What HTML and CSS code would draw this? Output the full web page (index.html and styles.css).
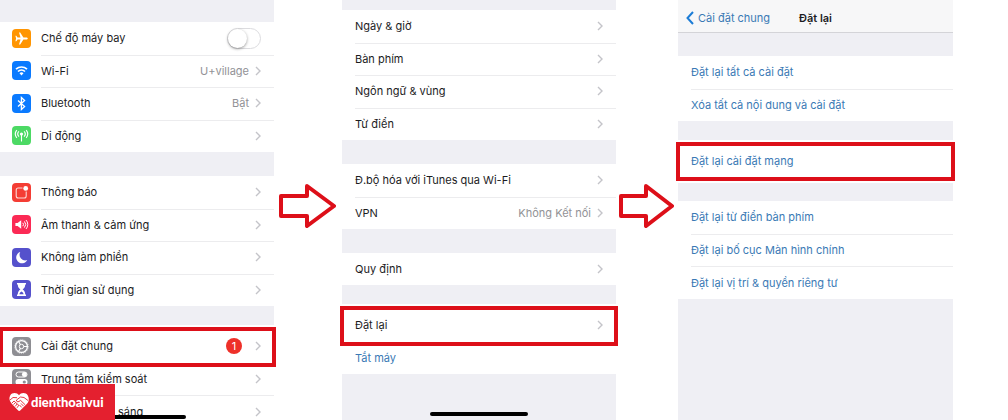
FILE: index.html
```html
<!DOCTYPE html>
<html lang="vi">
<head>
    <meta charset="UTF-8">
    <meta name="viewport" content="width=device-width, initial-scale=1.0">
    <title>Đặt lại cài đặt mạng</title>
    <link rel="stylesheet" href="styles.css">
</head>
<body>
    <svg class="defs" aria-hidden="true">
        <symbol id="chevron" viewBox="0 0 6 10"><path d="M1 1l4 4-4 4" fill="none" stroke="#c4c4c9" stroke-width="1.4"/></symbol>
    </svg>

    <main class="steps">
        <!-- Step 1: Settings -->
        <section class="phone phone-settings">
            <div class="group rows-4">
                <div class="row">
                    <svg class="icon orange" viewBox="0 0 19 19"><path d="M15.8 9.5c0-.7-.8-1.1-1.6-1.1h-2.8L8.2 3.6H7l1.5 4.800H5.600L4.300 6.800h-.9l.7 2.700-.7 2.700h.9l1.300-1.600h2.900L7 15.400h1.200l3.200-4.800h2.800c.8 0 1.600-.4 1.600-1.100z" fill="#fff"/></svg>
                    <label class="title" for="airplane">Chế độ máy bay</label>
                    <input class="toggle" type="checkbox" id="airplane">
                </div>
                <a class="row" href="#">
                    <svg class="icon blue" viewBox="0 0 19 19"><path d="M4 8.2a8 8 0 0 1 11 0M6 10.5a5 5 0 0 1 7 0" fill="none" stroke="#fff" stroke-width="1.7"/><path d="M7.5 12.2a3 3 0 0 1 4 0l-2 2.2z" fill="#fff"/></svg>
                    <span class="title">Wi-Fi</span>
                    <span class="value">U+village</span>
                    <svg class="chevron"><use href="#chevron"/></svg>
                </a>
                <a class="row" href="#">
                    <svg class="icon blue" viewBox="0 0 19 19"><path d="M6 6.4l6.6 6L9.4 15.4V3.6l3.2 3L6 12.6" fill="none" stroke="#fff" stroke-width="1.3"/></svg>
                    <span class="title">Bluetooth</span>
                    <span class="value">Bật</span>
                    <svg class="chevron"><use href="#chevron"/></svg>
                </a>
                <a class="row" href="#">
                    <svg class="icon green" viewBox="0 0 19 19"><circle cx="9.5" cy="8" r="1.6" fill="#fff"/><path d="M9.5 8v7.5M6.9 5.4a3.8 3.8 0 0 0 0 5.2M12.1 5.4a3.8 3.8 0 0 1 0 5.2M4.8 4.2a6 6 0 0 0 0 7.6M14.2 4.2a6 6 0 0 1 0 7.6" fill="none" stroke="#fff" stroke-width="1.1"/></svg>
                    <span class="title">Di động</span>
                    <svg class="chevron"><use href="#chevron"/></svg>
                </a>
            </div>
            <div class="group rows-4">
                <a class="row" href="#">
                    <svg class="icon red" viewBox="0 0 19 19"><path d="M10.5 5H6.2a2 2 0 0 0-2 2v6a2 2 0 0 0 2 2h6a2 2 0 0 0 2-2V8.5" fill="none" stroke="#fff" stroke-opacity=".8" stroke-width="1.1"/><circle cx="13.7" cy="5.4" r="2.4" fill="#fff"/></svg>
                    <span class="title">Thông báo</span>
                    <svg class="chevron"><use href="#chevron"/></svg>
                </a>
                <a class="row" href="#">
                    <svg class="icon pink" viewBox="0 0 19 19"><path d="M3.4 8h2.2l3.6-2.8v8.6L5.6 11H3.4z" fill="#fff"/><path d="M10.8 7.8a2.6 2.6 0 0 1 0 3.4M12.4 6.4a4.6 4.6 0 0 1 0 6.2M14 5a6.6 6.6 0 0 1 0 9" fill="none" stroke="#fff" stroke-width="1"/></svg>
                    <span class="title">Âm thanh &amp; cảm ứng</span>
                    <svg class="chevron"><use href="#chevron"/></svg>
                </a>
                <a class="row" href="#">
                    <svg class="icon purple" viewBox="0 0 19 19"><path d="M8.2 4a5.8 5.8 0 1 0 7 8.1A5.8 5.8 0 0 1 8.2 4z" fill="#fff"/></svg>
                    <span class="title">Không làm phiền</span>
                    <svg class="chevron"><use href="#chevron"/></svg>
                </a>
                <a class="row" href="#">
                    <svg class="icon purple" viewBox="0 0 19 19"><path d="M5 3h9v1.6h-.8c0 2.6-1 3.8-2.6 4.9 1.6 1.1 2.6 2.3 2.6 4.9h.8V16H5v-1.6h.8c0-2.6 1-3.8 2.6-4.9C6.8 8.4 5.8 7.2 5.8 4.6H5z" fill="#fff"/><path d="M7.4 14.2c.3-1.5 1.1-2 2.1-2.7 1 .7 1.8 1.2 2.1 2.7z" fill="#5551cc"/></svg>
                    <span class="title">Thời gian sử dụng</span>
                    <svg class="chevron"><use href="#chevron"/></svg>
                </a>
            </div>
            <div class="group rows-3">
                <a class="row marked marked-edge" href="#">
                    <svg class="icon gray" viewBox="0 0 19 19"><circle cx="9.5" cy="9.5" r="5.9" fill="none" stroke="#fff" stroke-width="1.3"/><circle cx="9.5" cy="9.5" r="6.8" fill="none" stroke="#fff" stroke-width=".8" stroke-dasharray="1 1"/><circle cx="9.5" cy="9.5" r="2.2" fill="none" stroke="#fff"/><path d="M11.7 9.5h3.5M8.4 7.6L6.6 4.5M8.4 11.4l-1.8 3.1" stroke="#fff" stroke-width="1.1"/></svg>
                    <span class="title">Cài đặt chung</span>
                    <span class="badge">1</span>
                    <svg class="chevron"><use href="#chevron"/></svg>
                </a>
                <a class="row" href="#">
                    <svg class="icon gray" viewBox="0 0 19 19"><rect x="4" y="3" width="11" height="5" rx="2.5" fill="none" stroke="#fff"/><circle cx="12.3" cy="5.5" r="2.4" fill="#fff"/><rect x="3.5" y="10" width="12" height="6" rx="3" fill="#fff"/><circle cx="12.3" cy="13" r="1.6" fill="#8e8e93"/></svg>
                    <span class="title">Trung tâm kiểm soát</span>
                    <svg class="chevron"><use href="#chevron"/></svg>
                </a>
                <a class="row behind-brand" href="#">
                    <span class="title">sáng</span>
                    <svg class="chevron"><use href="#chevron"/></svg>
                </a>
            </div>
            <div class="home-bar"></div>
        </section>

        <svg class="arrow" viewBox="0 0 57 46" width="57" height="46"><path d="M2 13h26V3l27 20-27 20V33H2z"/></svg>

        <!-- Step 2: General -->
        <section class="phone phone-general">
            <div class="group rows-4">
                <a class="row" href="#"><span class="title">Ngày &amp; giờ</span><svg class="chevron"><use href="#chevron"/></svg></a>
                <a class="row" href="#"><span class="title">Bàn phím</span><svg class="chevron"><use href="#chevron"/></svg></a>
                <a class="row" href="#"><span class="title">Ngôn ngữ &amp; vùng</span><svg class="chevron"><use href="#chevron"/></svg></a>
                <a class="row" href="#"><span class="title">Từ điển</span><svg class="chevron"><use href="#chevron"/></svg></a>
            </div>
            <div class="group rows-2">
                <a class="row" href="#"><span class="title">Đ.bộ hóa với iTunes qua Wi-Fi</span><svg class="chevron"><use href="#chevron"/></svg></a>
                <a class="row" href="#"><span class="title">VPN</span><span class="value">Không Kết nối</span><svg class="chevron"><use href="#chevron"/></svg></a>
            </div>
            <div class="group rows-1">
                <a class="row" href="#"><span class="title">Quy định</span><svg class="chevron"><use href="#chevron"/></svg></a>
            </div>
            <div class="group rows-2">
                <a class="row marked" href="#"><span class="title">Đặt lại</span><svg class="chevron"><use href="#chevron"/></svg></a>
                <button class="row action" type="button">Tắt máy</button>
            </div>
            <div class="home-bar"></div>
        </section>

        <svg class="arrow" viewBox="0 0 55 46" width="55" height="46"><path d="M2 13h25V3l26 20-26 20V33H2z"/></svg>

        <!-- Step 3: Reset -->
        <section class="phone phone-reset">
            <header class="nav">
                <a class="back" href="#"><svg width="8" height="14" viewBox="0 0 8 14"><path d="M7 1L1.5 7 7 13" fill="none" stroke="#1c7cd6" stroke-width="2"/></svg>Cài đặt chung</a>
                <h1>Đặt lại</h1>
            </header>
            <div class="group rows-2">
                <button class="row action" type="button">Đặt lại tất cả cài đặt</button>
                <button class="row action" type="button">Xóa tất cả nội dung và cài đặt</button>
            </div>
            <div class="group rows-1">
                <button class="row action marked" type="button">Đặt lại cài đặt mạng</button>
            </div>
            <div class="group rows-3">
                <button class="row action" type="button">Đặt lại từ điển bàn phím</button>
                <button class="row action" type="button">Đặt lại bố cục Màn hình chính</button>
                <button class="row action" type="button">Đặt lại vị trí &amp; quyền riêng tư</button>
            </div>
        </section>
    </main>

    <div class="brand">
        <svg width="20" height="20" viewBox="0 0 20 20"><path d="M10 3.2C7.8.2 3 .4 1.2 3.4-.4 6.2.6 9.4 3 12l6.2 6.6c.6.6 1.5.5 2 0L17.8 12c2.2-2.6 2.6-6 1-8.6C17 .4 12.2.2 10 3.2z" fill="#fff"/><path d="M1 8l3-2.5 4 .2M19 8.5l-4-3-3.5-.5L7.5 8c-.4 1.6 1.3 2.2 2.5 1.4l1.6-1 4.6 4.4M3 11l2-2 1.6 1.4-2 2.2M6.6 10.6l1.600 1.200-2 2.600M8.300 12.200l1.500 1-1.800 2.600M12 11.500l2.600 2.700M10.500 13l2.200 2.400" fill="none" stroke="#e4202f" stroke-width=".9"/></svg>
        <span>dienthoaivui</span>
    </div>
</body>
</html>
```
FILE: styles.css
```css
* { box-sizing: border-box; }
body { margin: 0; background: #fff; color: #1c1c1e; font-family: Inter, "Liberation Sans", sans-serif; font-size: 11px; line-height: 16px; overflow: hidden; }
a { color: inherit; text-decoration: none; }
.defs { position: absolute; width: 0; height: 0; }

.steps { display: grid; grid-template-columns: 274fr 68px 274fr 62px 275fr 55px; height: 100vh; }
.arrow { align-self: center; justify-self: center; margin-bottom: 9px; margin-right: 2px; fill: #fff; stroke: #dd0f19; stroke-width: 4px; stroke-linejoin: round; }

/* Phone screens */
.phone { position: relative; display: flex; flex-direction: column; gap: 24px; height: 100vh; background: #efeff4; }
.phone-settings { padding-top: 22px; }
.phone-general { padding-top: 10px; }
.group { display: grid; grid-auto-rows: 1fr; flex-shrink: 0; background: #fff; }
.rows-1 { height: 32px; }
.rows-2 { height: 65px; }
.rows-3 { height: 98px; }
.rows-4 { height: 130px; }
.row { position: relative; display: flex; align-items: center; padding: 0 13px; min-height: 0; }
.phone-settings .row { padding-left: 12px; }
.phone-settings .behind-brand { padding-left: 118px; }
.row + .row::before { content: ""; position: absolute; top: 0; left: 13px; right: 0; height: 1px; background: #ececee; }
.phone-settings .row + .row::before { left: 41px; }
.title { flex: 1; }
.value { color: #929296; margin-right: 6px; }
.chevron { width: 6px; height: 10px; }
.action { border: 0; background: none; color: #3a7ab5; font: inherit; text-align: left; }

/* Row icons */
.icon { width: 19px; height: 19px; margin-right: 10px; border-radius: 4px; }
.orange { background: #ff9502; }
.blue { background: #0a7aff; }
.green { background: #4cd964; }
.red { background: #f43d34; }
.pink { background: #fb2a55; }
.purple { background: #5551cc; }
.gray { background: #8e8e93; }

.badge { width: 16px; height: 16px; margin-right: 13px; border-radius: 50%; background: #ee3029; color: #fff; text-align: center; }
.toggle { appearance: none; width: 34px; height: 21px; margin: 0; border: 1px solid #dcdcdf; border-radius: 11px; background: #fff; }
.toggle::before { content: ""; display: block; width: 19px; height: 19px; border-radius: 50%; background: #fff; box-shadow: 0 1px 3px rgba(0, 0, 0, 0.4); }
.toggle:checked { background: #4cd964; }
.toggle:checked::before { margin-left: 13px; }

/* Red frame around the row to tap */
.marked::after { content: ""; position: absolute; z-index: 1; inset: -3px -2px -4px; border: 4px solid #dd0f19; box-shadow: 0 0 0 2px #fff; }
.marked-edge::after { left: -1px; }

.home-bar { position: absolute; z-index: 1; bottom: 4px; left: 50%; width: 98px; height: 4px; margin-left: -49px; border-radius: 2px; background: #000; }
.phone-settings .home-bar { bottom: 1px; }

.nav { display: grid; grid-template-columns: 1fr auto 1fr; align-items: center; height: 33px; margin-bottom: -1px; padding: 4px 8px 0; border-bottom: 1px solid #d4d4d8; background: #f7f7f8; flex-shrink: 0; }
.nav h1 { margin: 0; font-size: 11px; font-weight: 600; }
.back { display: flex; align-items: center; gap: 4px; color: #3a7ab5; }

.brand { position: fixed; z-index: 2; left: 0; bottom: 0; display: flex; align-items: center; gap: 2px; width: 115px; height: 36px; padding-left: 9px; background: #e4202f; color: #fff; font-family: Lato, sans-serif; font-size: 13px; font-weight: 900; }
```
